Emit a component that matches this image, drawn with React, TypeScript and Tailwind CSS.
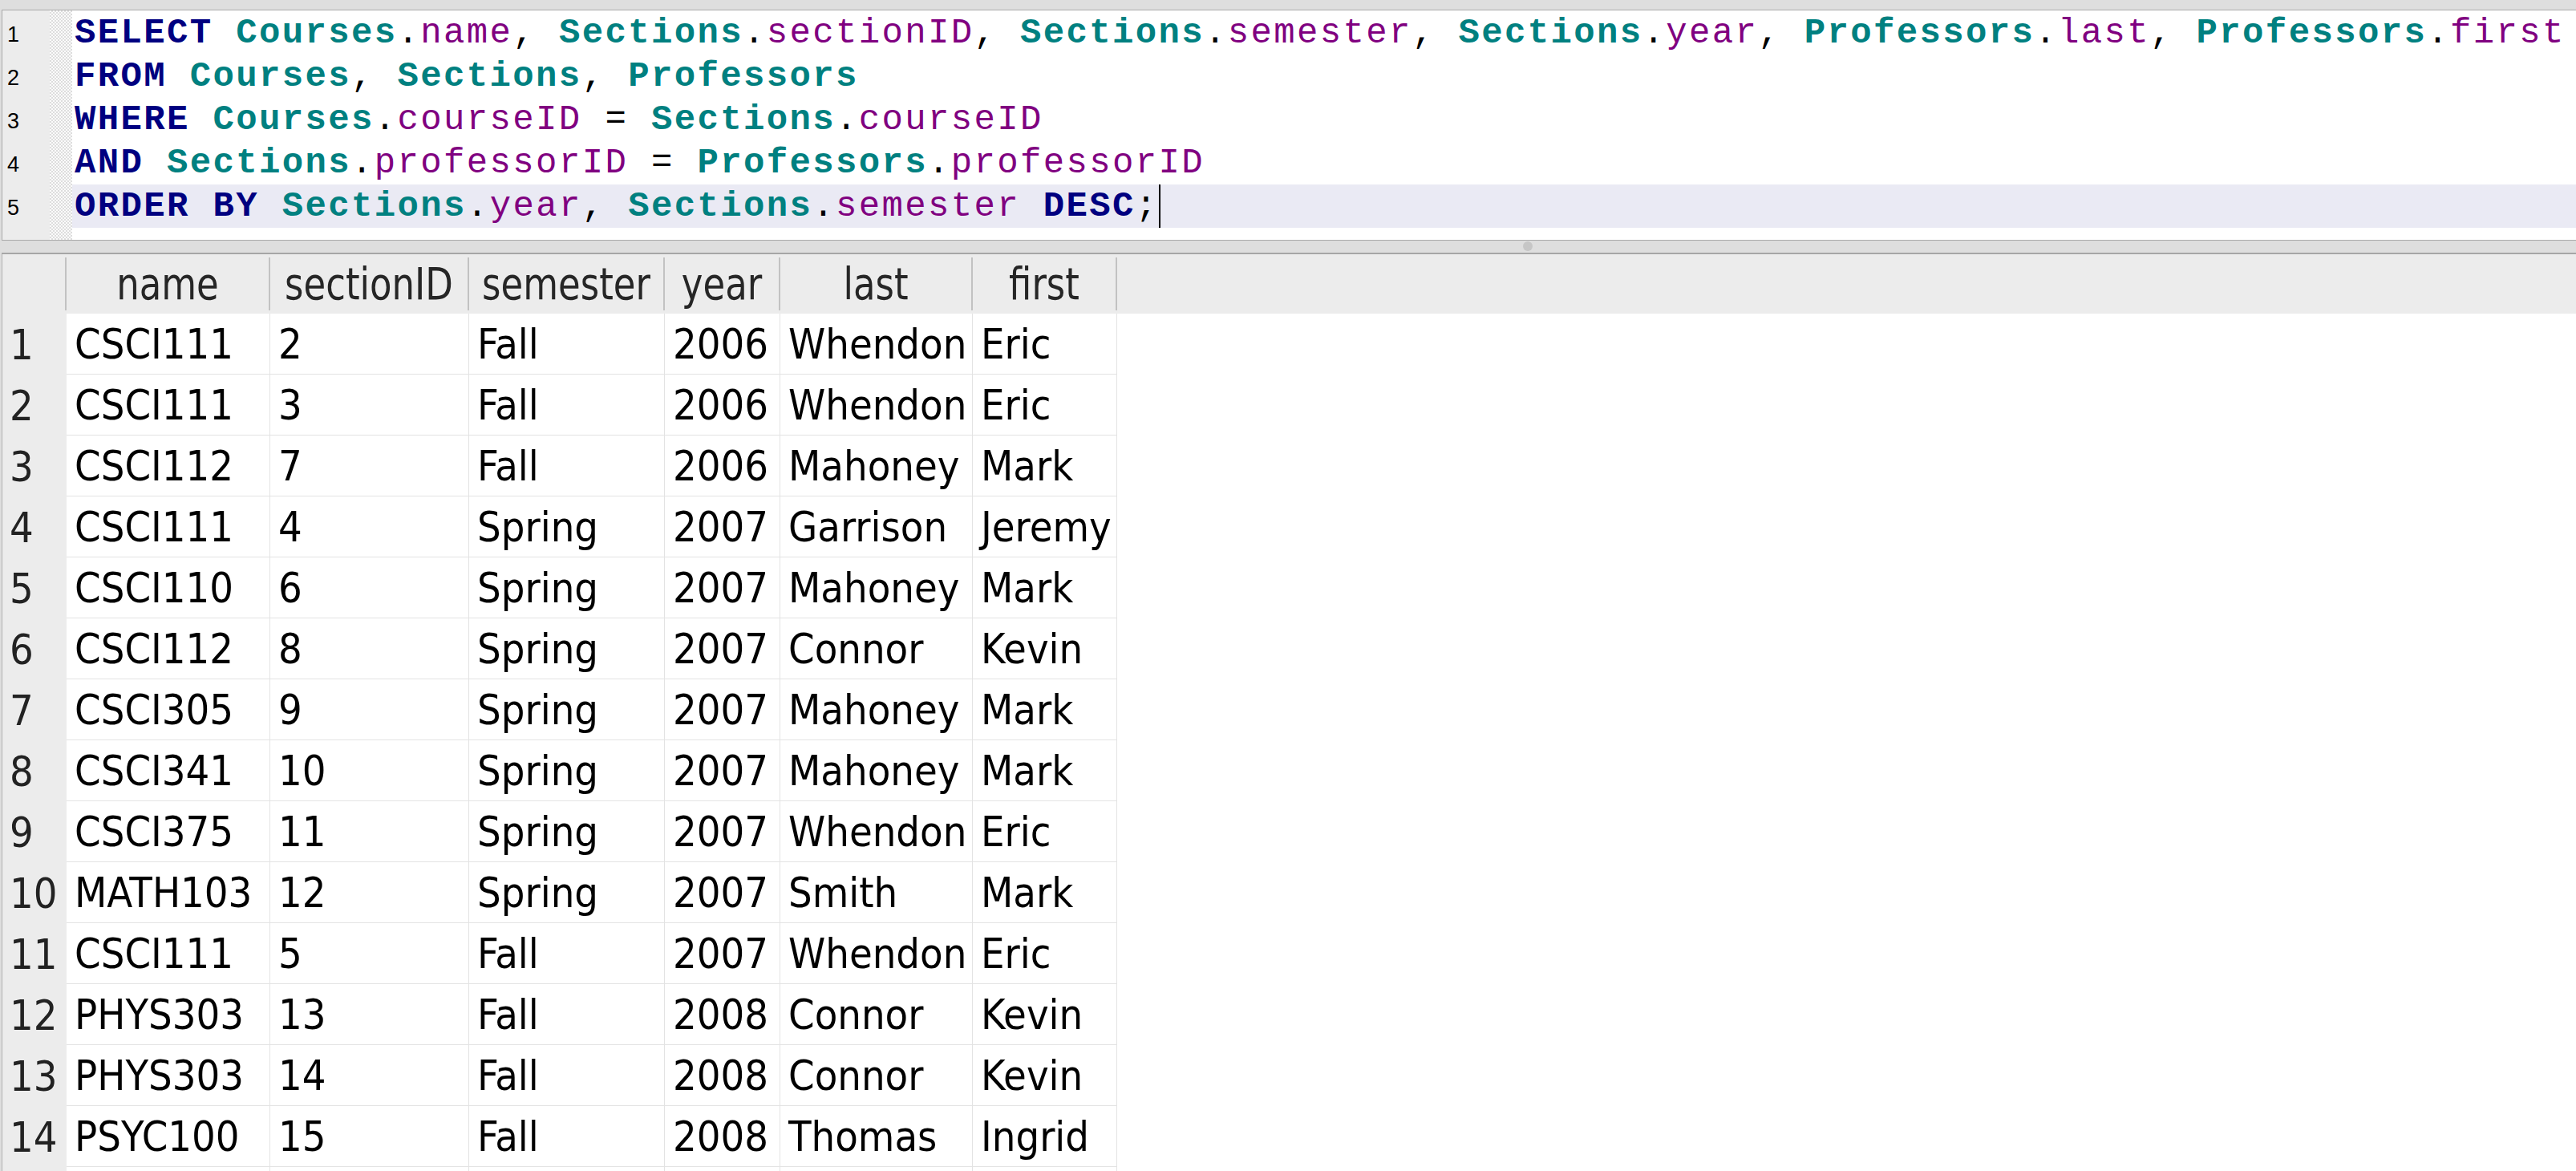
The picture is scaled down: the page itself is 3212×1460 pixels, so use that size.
import React from "react";

type Tok = [string, "k" | "t" | "c" | "p"];

const K = (s: string): Tok => [s, "k"];
const T = (s: string): Tok => [s, "t"];
const C = (s: string): Tok => [s, "c"];
const P = (s: string): Tok => [s, "p"];

const codeLines: Tok[][] = [
  [
    K("SELECT"), P(" "), T("Courses"), P("."), C("name"), P(", "),
    T("Sections"), P("."), C("sectionID"), P(", "),
    T("Sections"), P("."), C("semester"), P(", "),
    T("Sections"), P("."), C("year"), P(", "),
    T("Professors"), P("."), C("last"), P(", "),
    T("Professors"), P("."), C("first"),
  ],
  [K("FROM"), P(" "), T("Courses"), P(", "), T("Sections"), P(", "), T("Professors")],
  [
    K("WHERE"), P(" "), T("Courses"), P("."), C("courseID"), P(" = "),
    T("Sections"), P("."), C("courseID"),
  ],
  [
    K("AND"), P(" "), T("Sections"), P("."), C("professorID"), P(" = "),
    T("Professors"), P("."), C("professorID"),
  ],
  [
    K("ORDER BY"), P(" "), T("Sections"), P("."), C("year"), P(", "),
    T("Sections"), P("."), C("semester"), P(" "), K("DESC"), P(";"),
  ],
];

const tokClass: Record<string, string> = {
  k: "text-[#000080] font-bold",
  t: "text-[#008080] font-bold",
  c: "text-[#800080]",
  p: "text-black",
};

const columns = [
  { name: "name", w: "w-[254px]" },
  { name: "sectionID", w: "w-[248px]" },
  { name: "semester", w: "w-[244px]" },
  { name: "year", w: "w-[144px]" },
  { name: "last", w: "w-[240px]" },
  { name: "first", w: "w-[180px]" },
];

const rows: string[][] = [
  ["CSCI111", "2", "Fall", "2006", "Whendon", "Eric"],
  ["CSCI111", "3", "Fall", "2006", "Whendon", "Eric"],
  ["CSCI112", "7", "Fall", "2006", "Mahoney", "Mark"],
  ["CSCI111", "4", "Spring", "2007", "Garrison", "Jeremy"],
  ["CSCI110", "6", "Spring", "2007", "Mahoney", "Mark"],
  ["CSCI112", "8", "Spring", "2007", "Connor", "Kevin"],
  ["CSCI305", "9", "Spring", "2007", "Mahoney", "Mark"],
  ["CSCI341", "10", "Spring", "2007", "Mahoney", "Mark"],
  ["CSCI375", "11", "Spring", "2007", "Whendon", "Eric"],
  ["MATH103", "12", "Spring", "2007", "Smith", "Mark"],
  ["CSCI111", "5", "Fall", "2007", "Whendon", "Eric"],
  ["PHYS303", "13", "Fall", "2008", "Connor", "Kevin"],
  ["PHYS303", "14", "Fall", "2008", "Connor", "Kevin"],
  ["PSYC100", "15", "Fall", "2008", "Thomas", "Ingrid"],
  ["", "", "", "", "", ""],
];

const tableFont =
  "font-['DejaVu_Sans_Condensed','DejaVu_Sans',sans-serif] [font-stretch:condensed]";

export default function App() {
  return (
    <div className="w-[3212px] h-[1460px] overflow-hidden bg-[#dedede] flex flex-col pt-[12px] pl-[2px]">
      {/* SQL editor */}
      <div className="h-[288px] shrink-0 flex bg-white border-t border-l border-b border-[#aaaaaa]">
        {/* line numbers */}
        <div className="w-[59px] shrink-0 bg-[#ececec] flex flex-col pt-[3px] font-['Liberation_Sans',Arial,sans-serif] text-[27px] text-black">
          {codeLines.map((_, i) => (
            <div key={i} className="h-[54px] flex items-center pl-[6px]">
              {i + 1}
            </div>
          ))}
        </div>
        {/* fold strip */}
        <div className="w-[28px] shrink-0 bg-[#f6f6f6] bg-[repeating-conic-gradient(#dddddd_0%_25%,#fbfbfb_0%_50%)] bg-[length:4px_4px]" />
        {/* code */}
        <div className="flex-1 flex flex-col pt-[1px] overflow-hidden font-['Liberation_Mono','Courier_New',monospace] text-[44px] tracking-[2.35px] leading-[54px] whitespace-pre">
          {codeLines.map((line, i) => (
            <div
              key={i}
              className={
                "h-[54px] flex items-center pl-[3px] " +
                (i === 4 ? "bg-[#eaeaf4]" : "")
              }
            >
              <span>
                {line.map((t, j) => (
                  <span key={j} className={tokClass[t[1]]}>
                    {t[0]}
                  </span>
                ))}
              </span>
              {i === 4 && <span className="w-[2px] h-[54px] bg-black" />}
            </div>
          ))}
        </div>
      </div>

      {/* splitter */}
      <div className="h-[17px] shrink-0 flex items-center bg-[#dedede] border-b-2 border-[#a6a6a6] pb-[1px]">
        <div className="ml-[1897px] w-[12px] h-[12px] rounded-full bg-[#c6c6c6]" />
      </div>

      {/* result table */}
      <div className={"flex-1 flex flex-col bg-white border-l border-[#b0b0b0] " + tableFont}>
        {/* header */}
        <div className="h-[74px] shrink-0 flex bg-[#ececec] text-[50px] text-[#262626]">
          <div className="w-[80px] shrink-0 flex justify-end py-[4px]">
            <div className="w-[2px] bg-[#c2c2c2]" />
          </div>
          {columns.map((c) => (
            <div key={c.name} className={c.w + " shrink-0 flex"}>
              <div className="flex-1 flex items-center justify-center whitespace-nowrap">
                <span className="inline-block scale-y-[1.1]">{c.name}</span>
              </div>
              <div className="w-[2px] my-[4px] bg-[#c2c2c2]" />
            </div>
          ))}
        </div>

        {/* body */}
        {rows.map((r, i) => (
          <div key={i} className="h-[76px] shrink-0 flex text-[52px] text-black">
            <div className="w-[80px] shrink-0 bg-[#ececec] flex flex-col">
              <div className="flex-1 flex items-center pl-[9px] text-[#222222]">
                {r[0] === "" ? "" : i + 1}
              </div>
              <div className="h-[2px] mx-[4px] bg-[#bdbdbd]" />
            </div>
            {columns.map((c, j) => (
              <div
                key={j}
                className={
                  c.w +
                  " shrink-0 flex items-center pl-[10px] border-r border-b border-[#e3e3e3] whitespace-nowrap overflow-hidden"
                }
              >
                {r[j]}
              </div>
            ))}
          </div>
        ))}
      </div>
    </div>
  );
}
